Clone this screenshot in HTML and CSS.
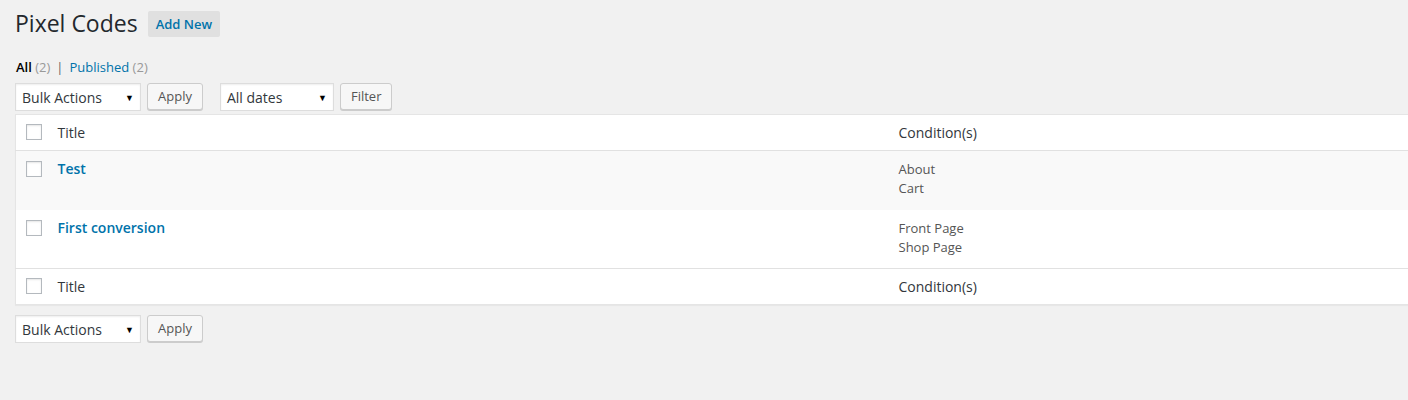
FILE: index.html
```html
<!DOCTYPE html>
<html>
<head>
<meta charset="utf-8">
<link rel="stylesheet" href="styles.css">
</head>
<body>
<div class="wrap">
  <div class="head">
    <h1 class="title">Pixel Codes</h1>
    <a class="add-new">Add New</a>
  </div>
  <ul class="subsubsub">
    <li class="current">All <span class="count">(2)</span></li>
    <li class="sep">|</li>
    <li><a>Published <span class="count">(2)</span></a></li>
  </ul>
  <div class="tablenav">
    <div class="select bulk"><span>Bulk Actions</span><span class="arrow">▼</span></div>
    <button class="button">Apply</button>
    <div class="select dates"><span>All dates</span><span class="arrow">▼</span></div>
    <button class="button">Filter</button>
  </div>
  <table class="list">
    <thead>
      <tr>
        <th class="cb"><span class="check"></span></th>
        <th class="col-title">Title</th>
        <th class="col-cond">Condition(s)</th>
      </tr>
    </thead>
    <tbody>
      <tr class="alt">
        <td class="cb"><span class="check"></span></td>
        <td class="col-title"><a class="row-title">Test</a></td>
        <td class="col-cond">About<br>Cart</td>
      </tr>
      <tr>
        <td class="cb"><span class="check"></span></td>
        <td class="col-title"><a class="row-title">First conversion</a></td>
        <td class="col-cond">Front Page<br>Shop Page</td>
      </tr>
    </tbody>
    <tfoot>
      <tr>
        <th class="cb"><span class="check"></span></th>
        <th class="col-title">Title</th>
        <th class="col-cond">Condition(s)</th>
      </tr>
    </tfoot>
  </table>
  <div class="tablenav bottom">
    <div class="select bulk"><span>Bulk Actions</span><span class="arrow">▼</span></div>
    <button class="button">Apply</button>
  </div>
</div>
</body>
</html>
```

FILE: styles.css
```css
html, body {
  margin: 0;
  padding: 0;
}
body {
  background: #f1f1f1;
  font-family: "Open Sans", "Liberation Sans", sans-serif;
  font-size: 13px;
  color: #444;
  overflow: hidden;
}
.wrap {
  padding: 0 0 0 15px;
}
.head {
  display: flex;
  align-items: center;
  height: 48px;
}
.title {
  margin: 0;
  font-size: 23px;
  font-weight: 400;
  color: #23282d;
  line-height: 29px;
  margin-top: -2px;
}
.add-new {
  margin-left: 10px;
  background: #e0e0e0;
  color: #0073aa;
  font-weight: 600;
  font-size: 13px;
  line-height: 26px;
  height: 26px;
  padding: 0 8px;
  border-radius: 2px;
}
.subsubsub {
  list-style: none;
  margin: 10px 0 0 1px;
  padding: 0;
  display: flex;
  font-size: 13px;
  line-height: 18px;
  color: #666;
}
.subsubsub li { margin: 0; }
.subsubsub .current { color: #000; font-weight: 600; }
.subsubsub .count { color: #999; font-weight: 400; }
.subsubsub .sep { margin: 0 6px 0 6px; }
.subsubsub a { color: #0073aa; }
.tablenav {
  display: flex;
  align-items: flex-start;
  margin-top: 7px;
  height: 31px;
}
.tablenav.bottom { margin-top: 10px; }
.select {
  box-sizing: border-box;
  height: 28px;
  background: #fff;
  border: 1px solid #ddd;
  box-shadow: inset 0 1px 2px rgba(0,0,0,.07);
  color: #32373c;
  font-size: 14px;
  line-height: 27px;
  padding: 0 0 0 6px;
  display: flex;
  justify-content: space-between;
}
.select .arrow {
  font-size: 9px;
  color: #000;
  margin-right: 6px;
  line-height: 27px;
}
.bulk { width: 126px; }
.dates { width: 114px; margin-left: 17px; }
.button {
  box-sizing: border-box;
  height: 27px;
  margin-left: 6px;
  background: #f7f7f7;
  border: 1px solid #ccc;
  border-radius: 3px;
  box-shadow: 0 1px 0 #ccc;
  color: #555;
  font-family: "Open Sans", "Liberation Sans", sans-serif;
  font-size: 13px;
  padding: 0 10px 1px;
  line-height: 24px;
}
.list {
  width: 1410px;
  border-collapse: collapse;
  table-layout: fixed;
  background: #fff;
  border: 1px solid #e5e5e5;
  box-shadow: 0 1px 1px rgba(0,0,0,.04);
}
.list th, .list td {
  text-align: left;
  vertical-align: top;
  padding: 0;
}
.list th {
  font-weight: 400;
  font-size: 14px;
  color: #32373c;
  line-height: 20px;
  padding: 8px 10px 7px;
}
.list th.cb, .list td.cb {
  width: 32px;
  padding: 9px 0 0 10px;
  box-sizing: border-box;
}
.list td.cb { padding-top: 10px; }
.list .col-title { width: 821px; }
.list thead tr { border-bottom: 1px solid #e1e1e1; }
.list tfoot tr { border-top: 1px solid #e1e1e1; }
.list tbody td { height: 59px; box-sizing: border-box; }
.list tbody tr.alt { background: #f9f9f9; }
.list td {
  padding: 8px 10px 0;
  font-size: 13px;
  line-height: 19px;
  color: #555;
}
.row-title {
  color: #0073aa;
  font-weight: 600;
  font-size: 14px;
  line-height: 20px;
}
.list td.col-cond { padding-top: 9px; }
.check {
  display: block;
  width: 16px;
  height: 16px;
  box-sizing: border-box;
  border: 1px solid #b4b9be;
  background: #fff;
  box-shadow: inset 0 1px 2px rgba(0,0,0,.1);
}
```
